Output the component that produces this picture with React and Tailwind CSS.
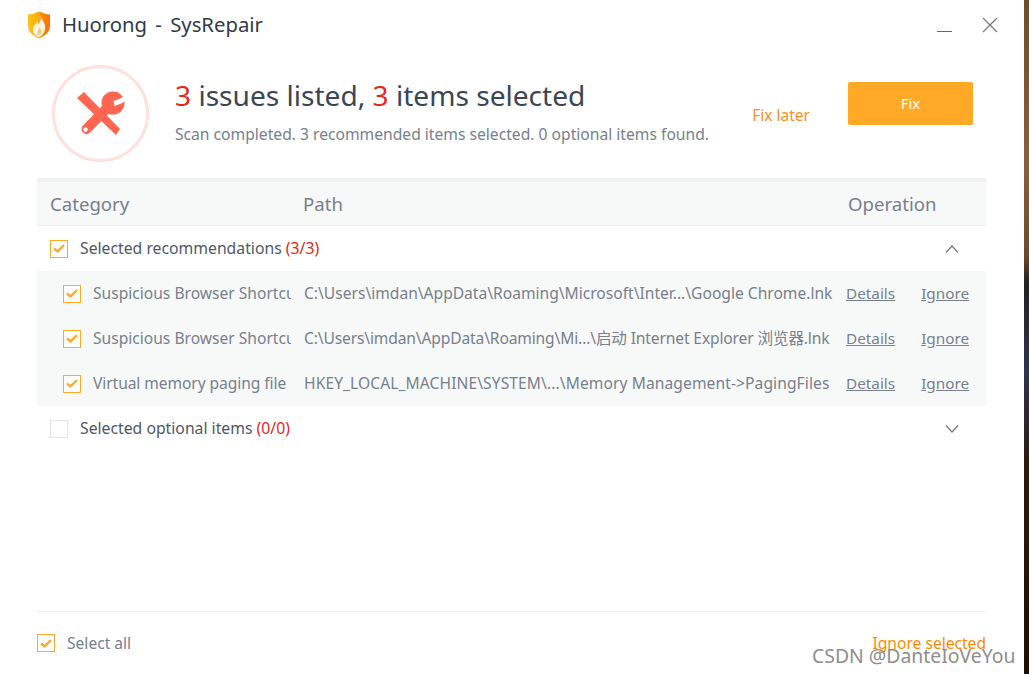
import React from 'react';

const FONT = '"Noto Sans", "Noto Sans CJK SC", sans-serif';

const rows = [
    { name: 'Suspicious Browser Shortcut', path: 'C:\\Users\\imdan\\AppData\\Roaming\\Microsoft\\Inter...\\Google Chrome.lnk', nameClass: '', pathClass: '' },
    { name: 'Suspicious Browser Shortcut', path: 'C:\\Users\\imdan\\AppData\\Roaming\\Mi...\\启动 Internet Explorer 浏览器.lnk', nameClass: '', pathClass: 'tracking-[-0.14px]' },
    { name: 'Virtual memory paging file', path: 'HKEY_LOCAL_MACHINE\\SYSTEM\\...\\Memory Management->PagingFiles', nameClass: 'tracking-[-0.08px]', pathClass: 'tracking-[0.09px]' },
];

const Check = ({ checked = true }) => (
    <span className={`flex h-[18px] w-[18px] shrink-0 items-center justify-center border-[1.5px] bg-white ${checked ? 'border-[#ffa928]' : 'border-[#e3e3e3]'}`}>
        {checked && (
            <svg width="12" height="9" viewBox="0 0 12 9" fill="none">
                <path d="M1 4.5 L4.5 7.4 L11 1.2" stroke="#ffa928" strokeWidth="2.4" />
            </svg>
        )}
    </span>
);

const Chevron = ({ up }) => (
    <svg width="14" height="8" viewBox="0 0 14 8" fill="none">
        <path d={up ? 'M1 7.5 L7 1 L13 7.5' : 'M1 .5 L7 7 L13 .5'} stroke="#777" strokeWidth="1.2" />
    </svg>
);

const Logo = () => (
    <svg width="24" height="28" viewBox="0 0 24 28">
        <defs>
            <linearGradient id="shield" x1="0" y1="0" x2="1" y2="0">
                <stop offset="0" stopColor="#ffc414" />
                <stop offset="0.55" stopColor="#ffa60f" />
                <stop offset="0.56" stopColor="#ff8a00" />
                <stop offset="1" stopColor="#f96f0a" />
            </linearGradient>
        </defs>
        <path d="M1 3.5 Q7 3 12 0.5 Q17 3 23 3.5 V15 Q23 23 12 27.5 Q1 23 1 15 Z" fill="url(#shield)" />
        <path d="M13.5 4 C14.5 9 19 12 18 18 C17.4 23 14 25.5 12 26 C8.5 25.5 6 22.5 6 18.5 C6 14.5 9 13.5 10 10.5 C11 12 11 13 11 14 C13 11.5 14.5 8 13.5 4 Z" fill="#fff4e4" />
        <path d="M12.5 16 C13.5 18.5 15 19.5 14 22 C13.5 23.5 12.5 24 12 24 C10.5 23.5 10 22 10.5 20.5 C11 19 12.5 18.5 12.5 16 Z" fill="#ffc56a" />
    </svg>
);

const Tools = () => (
    <svg width="48" height="46" viewBox="0 0 48 46">
        {/* screwdriver bar */}
        <path d="M0 7 L7 1 L43 38 L39 44 Z" fill="#ff6550" />
        {/* wrench */}
        <circle cx="36" cy="12" r="11.5" fill="#ff6550" />
        <path d="M9.5 38 L32 15" stroke="#ff6550" strokeWidth="10" strokeLinecap="round" />
        <path d="M37 12.5 Q43 11 50 6.5" stroke="#fff" strokeWidth="5" fill="none" />
        <circle cx="8.5" cy="38.5" r="2.2" fill="#fff" />
    </svg>
);

export default function App() {
    return (
        <div className="flex h-[674px] w-[1029px] overflow-hidden bg-white" style={{ fontFamily: FONT }}>
            <div className="relative flex w-[1024px] shrink-0 flex-col">
                {/* title bar */}
                <div className="flex h-[50px] items-center pl-[27px] pr-[26px]">
                    <Logo />
                    <span className="ml-[11px] -mt-[2px] text-[20.3px] text-[#2f3b4a] [word-spacing:3px]">Huorong - SysRepair</span>
                    <div className="ml-auto flex items-center gap-[30px]">
                        <span className="mt-[12px] h-px w-[15px] bg-[#666]" />
                        <svg width="16" height="16" viewBox="0 0 16 16" fill="none">
                            <path d="M1 1 L15 15 M15 1 L1 15" stroke="#777" strokeWidth="1.2" />
                        </svg>
                    </div>
                </div>

                {/* summary */}
                <div className="flex h-[128px] items-start pl-[52px] pr-[51px] pt-[15px]">
                    <div className="flex h-[97px] w-[97px] shrink-0 items-center justify-center rounded-full border-[3px] border-[#ffe0da]">
                        <Tools />
                    </div>
                    <div className="ml-[26px] w-[540px] shrink-0">
                        <div className="mt-[7px] text-[28.1px] leading-[46px] text-[#3a4656]">
                            <span className="text-[#e5281b]">3</span> issues listed, <span className="text-[#e5281b]">3</span> items selected
                        </div>
                        <div className="mt-[5px] text-[15.65px] leading-[22px] text-[#77808c]">
                            Scan completed. 3 recommended items selected. 0 optional items found.
                        </div>
                    </div>
                    <span className="ml-auto mt-[39px] text-[15.5px] leading-[22px] text-[#ff8e1e]">Fix later</span>
                    <button className="ml-[38px] mt-[17px] h-[43px] w-[125px] rounded-[2px] bg-[#ffa926] text-[15px] text-white">Fix</button>
                </div>

                {/* table */}
                <div className="ml-[37px] mr-[38px] flex flex-1 flex-col">
                    <div className="flex h-[48px] items-center border-b border-t-4 border-b-[#eeeeee] border-t-[#f0f0f0] bg-[#f7f8f8] text-[18.6px] text-[#77808c]">
                        <span className="ml-[13px] w-[253px]">Category</span>
                        <span className="w-[545px]">Path</span>
                        <span>Operation</span>
                    </div>

                    <div className="flex h-[45px] items-center pl-[13px] pr-[27px] text-[15.75px] text-[#4d5866]">
                        <Check />
                        <span className="ml-[12px]">Selected recommendations <span className="text-[#e5281b]">(3/3)</span></span>
                        <span className="ml-auto flex"><Chevron up /></span>
                    </div>

                    <div className="bg-[#f7f9f9]">
                        {rows.map((row, i) => (
                            <div key={i} className="flex h-[45px] items-center pl-[26px] text-[15.6px] text-[#77808c]">
                                <Check />
                                <span className={`ml-[12px] w-[198px] overflow-hidden whitespace-nowrap ${row.nameClass}`}>{row.name}</span>
                                <span className={`ml-[13px] w-[542px] overflow-hidden whitespace-nowrap ${row.pathClass}`}>{row.path}</span>
                                <span className="text-[15.3px] underline">Details</span>
                                <span className="ml-[26px] text-[15.3px] underline">Ignore</span>
                            </div>
                        ))}
                    </div>

                    <div className="flex h-[45px] items-center pl-[13px] pr-[27px] text-[15.75px] text-[#4d5866]">
                        <Check checked={false} />
                        <span className="ml-[12px]">Selected optional items <span className="text-[#e5281b]">(0/0)</span></span>
                        <span className="ml-auto flex"><Chevron /></span>
                    </div>

                    {/* footer */}
                    <div className="mt-auto flex h-[63px] items-center border-t border-[#eeeeee] text-[15.6px]">
                        <Check />
                        <span className="ml-[12px] mt-px text-[#77808c]">Select all</span>
                        <span className="ml-auto mt-px text-[#ff8a00]">Ignore selected</span>
                    </div>
                </div>

                <span className="absolute left-[812px] top-[644px] whitespace-nowrap text-[19.4px] leading-[24px] text-[#8e8e8e]">CSDN @DanteIoVeYou</span>
            </div>

            {/* desktop behind the window */}
            <div className="w-[5px] bg-[linear-gradient(180deg,#6f4d30_0%,#86603c_25%,#6b4a30_38%,#222_42%,#33334a_55%,#2a1c14_68%,#1a1008_100%)]" />
        </div>
    );
}
